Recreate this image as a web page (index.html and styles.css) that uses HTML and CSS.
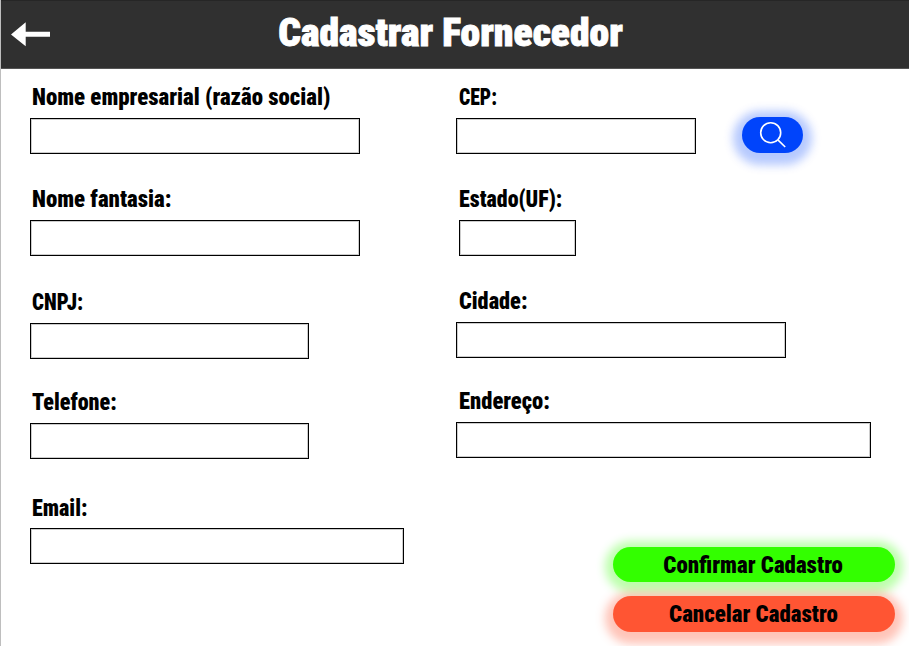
FILE: index.html
```
<!DOCTYPE html>
<html lang="pt-BR">
<head>
<meta charset="utf-8">
<title>Cadastrar Fornecedor</title>
<link rel="stylesheet" href="styles.css">
</head>
<body>
<div class="page">
  <header class="header">
    <a class="back" href="#" aria-label="Voltar">
      <svg width="40" height="26" viewBox="0 0 40 26"><path d="M0 12.5 14.7 .3V9.7H39V14.7H14.7V24.3Z" fill="#fff"/></svg>
    </a>
    <h1 class="title"><span>Cadastrar Fornecedor</span></h1>
  </header>
  <form class="form">
    <div class="column">
      <div class="field"><label class="l-razao" for="razao">Nome empresarial (razão social)</label><input id="razao" class="w-330"></div>
      <div class="field"><label class="l-fantasia" for="fantasia">Nome fantasia:</label><input id="fantasia" class="w-330"></div>
      <div class="field"><label class="l-cnpj" for="cnpj">CNPJ:</label><input id="cnpj" class="w-279"></div>
      <div class="field"><label class="l-telefone" for="telefone">Telefone:</label><input id="telefone" class="w-279"></div>
      <div class="field"><label class="l-email" for="email">Email:</label><input id="email" class="w-374"></div>
    </div>
    <div class="column right">
      <div class="field">
        <label class="l-cep" for="cep">CEP:</label>
        <div class="cep-row">
          <input id="cep" class="w-240">
          <button class="search" type="button" aria-label="Buscar">
            <svg width="28" height="28" viewBox="0 0 28 28" fill="none" stroke="#fff" stroke-width="1.6"><circle cx="11.7" cy="11.7" r="10"/><path d="M18.9 18.9 26.2 26"/></svg>
          </button>
        </div>
      </div>
      <div class="field"><label class="l-uf" for="uf">Estado(UF):</label><input id="uf" class="w-117"></div>
      <div class="field"><label class="l-cidade" for="cidade">Cidade:</label><input id="cidade" class="w-330"></div>
      <div class="field"><label class="l-endereco" for="endereco">Endereço:</label><input id="endereco" class="w-415"></div>
      <div class="actions">
        <button class="action confirm" type="button"><span>Confirmar Cadastro</span></button>
        <button class="action cancel" type="button"><span>Cancelar Cadastro</span></button>
      </div>
    </div>
  </form>
</div>
</body>
</html>
```
FILE: styles.css
```
* { box-sizing: border-box; }
body { margin: 0; background: #fff; color: #000; font-family: Roboto, "Liberation Sans Narrow", sans-serif; font-stretch: 75%; overflow: hidden; }
.page { height: 646px; border-left: 1px solid #bebebe; overflow: hidden; }
.header { display: grid; grid-template-columns: 60px 1fr 69px; align-items: center; height: 69px; margin-left: -1px; background: #303030; border: 1px solid #262626; border-width: 1px 0 1px 1px; border-bottom-color: #555; }
.back { display: block; height: 26px; margin-left: 10px; }
.back svg { display: block; }
.title { margin: 0 0 4px; color: #fff; font-size: 39px; line-height: 46px; font-weight: 900; text-align: center; white-space: nowrap; -webkit-text-stroke: .9px #fff; }
.title span { display: inline-block; margin: 0 -60px; transform: scaleX(1.016); }
.form { display: grid; grid-template-columns: 426px 1fr; padding-left: 29px; }
.column { display: grid; grid-template-rows: 102px 103px 100px 106px 90px; padding-top: 13px; align-items: start; }
.right { grid-template-rows: 102px 102px 100px 109px auto; }
.field { display: grid; }
label { display: block; width: max-content; height: 36px; padding-top: 1px; margin-left: 2px; font-size: 24px; line-height: 29px; font-weight: 900; white-space: nowrap; transform-origin: 0 50%; }
.right label { margin-left: 3px; }
.l-razao, .l-fantasia { transform: scaleX(.952); }
.l-cnpj { transform: scaleX(.87); }
.l-telefone, .l-email { transform: scaleX(.92); }
.l-cep { transform: scaleX(.82); }
.l-uf { transform: scaleX(.915); }
.l-cidade { transform: scaleX(.93); }
.l-endereco { transform: scaleX(.94); }
input { display: block; height: 36px; margin: 0; padding: 0 8px; border: 1px solid #000; border-radius: 0; background: #fff; outline: 0; box-shadow: inset 0 0 0 1px rgba(0,0,0,.2); font: inherit; }
#email { margin-top: -1px; }
.w-117 { width: 117px; margin-left: 3px; }
.w-240 { width: 240px; }
.w-279 { width: 279px; }
.w-330 { width: 330px; }
.w-374 { width: 374px; }
.w-415 { width: 415px; }
.cep-row { display: flex; gap: 46px; }
.search { display: grid; place-items: center; width: 61px; height: 36px; margin-top: -1px; padding: 0; border: 0; border-radius: 18px; background: #0044fb; box-shadow: 0 3px 10px 9px rgba(0,68,251,.29); }
.search svg { display: block; }
.actions { display: grid; gap: 14px; width: 282px; margin-left: 157px; padding-top: 52px; }
.action { height: 35px; padding: 0; border: 0; border-radius: 18px; color: #000; font: 900 24px/37px Roboto, sans-serif; font-stretch: 75%; white-space: nowrap; }
.action span { display: inline-block; transform: translateX(-1px) scaleX(.954); }
.confirm { background: #33ff00; box-shadow: 0 2px 10px 8px rgba(51,255,0,.33); }
.cancel { height: 36px; background: #ff5533; box-shadow: 0 4px 10px 8px rgba(255,85,51,.35); }
```
